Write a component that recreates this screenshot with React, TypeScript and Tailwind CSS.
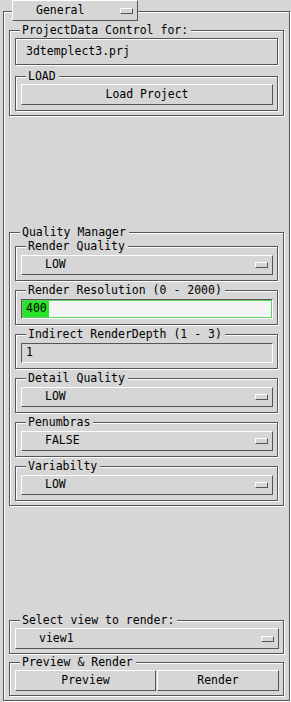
import React from 'react';

const etched = 'border border-[#555] shadow-[inset_1px_1px_0_#fff,1px_1px_0_#fff]';
const raised = 'border border-t-white border-l-white border-r-[#555] border-b-[#555] bg-[#d6d6d6]';
const sunken = 'border border-t-[#555] border-l-[#555] border-r-white border-b-white';

function Frame({ title, className, children }: { title: string; className: string; children: React.ReactNode }) {
  return (
    <fieldset className={`min-w-0 ${etched} ${className}`}>
      <legend className="ml-[5px] h-[14px] bg-[#d6d6d6] pl-[2px] pr-[3px] leading-[14px]">{title}</legend>
      {children}
    </fieldset>
  );
}

function OptionMenu({ value, className = 'h-[20px]' }: { value: string; className?: string }) {
  return (
    <div className={`flex items-center justify-between pl-[23px] pr-[4px] ${raised} ${className}`}>
      <span className="leading-none">{value}</span>
      <span className={`h-[6px] w-[13px] ${raised}`} />
    </div>
  );
}

function PushButton({ label, className }: { label: string; className: string }) {
  return <div className={`flex h-[21px] items-center justify-center ${raised} ${className}`}>{label}</div>;
}

// frames stacked inside Quality Manager
const innerFrame = 'mt-[2px] pt-[2px] pb-[5px] pl-[5px] pr-[4px]';

export default function App() {
  return (
    <div className="h-[702px] w-[291px] overflow-hidden bg-[#d6d6d6] pl-[3px] font-['DejaVu_Sans_Mono',monospace] text-[11.5px] text-black">
      <fieldset className={`w-[287px] min-w-0 px-[5px] pb-[4px] ${etched}`}>
        <legend className="ml-[3px] pb-[2px]">
          <OptionMenu value="General" className="h-[21px] w-[126px]" />
        </legend>

        <Frame title="ProjectData Control for:" className="px-[5px] pt-[1px] pb-[4px]">
          <div className={`flex h-[27px] items-center pl-[10px] ${etched}`}>3dtemplect3.prj</div>
          <Frame title="LOAD" className="mt-[4px] pt-[1px] pb-[5px] pl-[5px] pr-[4px]">
            <PushButton label="Load Project" className="w-full" />
          </Frame>
        </Frame>

        <Frame title="Quality Manager" className="mt-[109px] px-[5px] pb-[4px]">
          <Frame title="Render Quality" className="pt-[2px] pb-[5px] pl-[5px] pr-[4px]">
            <OptionMenu value="LOW" />
          </Frame>
          <Frame title="Render Resolution (0 - 2000)" className={innerFrame}>
            <div className={`h-[20px] ${sunken}`}>
              <div className="flex h-full items-center border border-[#5fcf5f] bg-[#f5f5f5]">
                <span className="flex h-[16px] items-center bg-[#27e327] pl-[3px] pr-[2px]">400</span>
              </div>
            </div>
          </Frame>
          <Frame title="Indirect RenderDepth (1 - 3)" className={innerFrame}>
            <div className={`flex h-[20px] items-center pl-[4px] ${sunken}`}>1</div>
          </Frame>
          <Frame title="Detail Quality" className={innerFrame}>
            <OptionMenu value="LOW" />
          </Frame>
          <Frame title="Penumbras" className={innerFrame}>
            <OptionMenu value="FALSE" />
          </Frame>
          <Frame title="Variabilty" className={innerFrame}>
            <OptionMenu value="LOW" />
          </Frame>
        </Frame>

        <Frame title="Select view to render:" className="mt-[107px] pt-[1px] pb-[4px] pl-[5px] pr-[4px]">
          <OptionMenu value="view1" className="h-[21px]" />
        </Frame>

        <Frame title="Preview & Render" className="mt-[1px] pt-[1px] pb-[4px] pl-[5px] pr-[4px]">
          <div className="flex gap-[1px]">
            <PushButton label="Preview" className="w-[141px]" />
            <PushButton label="Render" className="flex-1" />
          </div>
        </Frame>
      </fieldset>
    </div>
  );
}
